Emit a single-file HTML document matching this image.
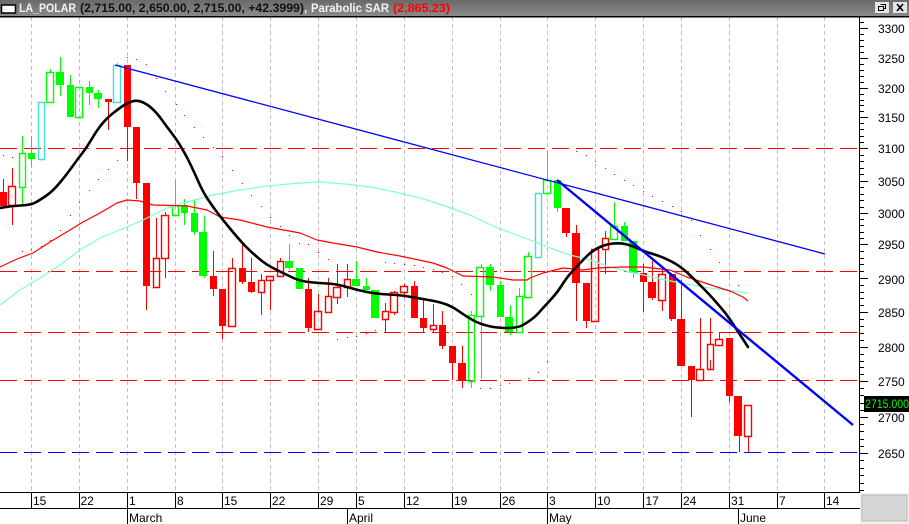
<!DOCTYPE html>
<html><head><meta charset="utf-8"><style>
html,body{margin:0;padding:0;background:#fff}
svg{display:block;font-family:"Liberation Sans",sans-serif}
</style></head><body>
<svg width="909" height="524" viewBox="0 0 909 524" xmlns="http://www.w3.org/2000/svg">
<defs><linearGradient id="tb" x1="0" y1="0" x2="0" y2="1"><stop offset="0" stop-color="#6a6a6a"/><stop offset="1" stop-color="#8a8a8a"/></linearGradient></defs>
<rect width="909" height="524" fill="#fff"/>
<!-- grid -->
<path d="M31.5 17V492M79.5 17V492M127.5 17V492M175.5 17V492M222.5 17V492M270.5 17V492M318.5 17V492M356.5 17V492M404.5 17V492M452.5 17V492M500.5 17V492M547.5 17V492M595.5 17V492M643.5 17V492M681.5 17V492M729.5 17V492M777.5 17V492M824.5 17V492" stroke="#c0c0c0" stroke-dasharray="4 3" fill="none" shape-rendering="crispEdges"/>
<!-- horizontals -->
<path d="M0 148.5H858M0 271.5H858M0 332.5H858M0 380.5H858" stroke="#f00" stroke-dasharray="17 7" fill="none" shape-rendering="crispEdges"/>
<path d="M0 452.5H858" stroke="#00f" stroke-dasharray="17 7" fill="none" shape-rendering="crispEdges"/>
<g shape-rendering="crispEdges">
<!-- wicks -->
<path fill="none" stroke="#f00" d="M3.5 179V192M12.5 168V186M12.5 205V225M108.5 102V130M127.5 127V161M136.5 183V199M146.5 286V310M156.5 218V258M165.5 212V215M165.5 258V278M213.5 251V276M213.5 289V296M222.5 326V339M232.5 258V268M242.5 243V268M242.5 282V284M251.5 258V282M251.5 292V293M261.5 274V280M261.5 292V315M270.5 280V310M280.5 258V261M308.5 278V289M308.5 328V332M318.5 294V311M328.5 278V296M337.5 264V287M337.5 297V304M347.5 264V279M347.5 287V297M385.5 303V311M385.5 319V332M394.5 291V292M394.5 312V315M404.5 284V286M404.5 292V298M414.5 281V286M423.5 298V318M423.5 328V332M433.5 304V325M433.5 329V332M442.5 311V325M442.5 346V349M452.5 363V380M462.5 346V363M462.5 380V388M566.5 233V237M576.5 225V233M576.5 283V321M586.5 321V328M605.5 231V238M605.5 249V274M643.5 264V273M643.5 282V312M652.5 261V282M652.5 298V300M662.5 267V274M662.5 300V311M671.5 319V321M681.5 280V319M691.5 380V417M700.5 318V369M710.5 318V344M710.5 360V369M719.5 332V339M719.5 345V346M729.5 396V402M739.5 436V452M748.5 436V452"/>
<path fill="none" stroke="#0f0" d="M22.5 136V153M22.5 187V205M31.5 136V153M31.5 159V167M50.5 69V72M60.5 57V72M60.5 85V96M70.5 75V85M89.5 81V87M89.5 93V105M98.5 90V93M98.5 99V108M175.5 180V205M184.5 199V205M184.5 213V225M194.5 199V213M194.5 232V235M204.5 216V232M204.5 276V278M289.5 244V261M289.5 268V270M356.5 261V279M366.5 278V286M366.5 290V293M471.5 311V315M471.5 381V388M481.5 264V267M481.5 316V379M490.5 264V267M490.5 285V291M500.5 281V285M510.5 305V317M510.5 332V335M519.5 288V296M528.5 252V256M547.5 151V180M557.5 208V212M614.5 202V226M614.5 239V240M624.5 222V226M633.5 273V278"/>
<path fill="none" stroke="#40e0d0" d="M117.5 63V65M41.5 159V160"/>
<!-- solid -->
<path fill="#f00" d="M0 192h7v14h-7zM105 99h7v3h-7zM124 65h7v62h-7zM133 127h7v56h-7zM143 183h7v103h-7zM210 276h7v13h-7zM219 289h7v37h-7zM239 268h7v14h-7zM248 282h7v10h-7zM305 289h7v39h-7zM411 286h7v32h-7zM420 318h7v10h-7zM439 325h7v21h-7zM449 346h7v17h-7zM458 363h8v17h-8zM562 208h8v25h-8zM572 233h8v50h-8zM583 283h7v38h-7zM640 273h7v9h-7zM648 282h8v16h-8zM669 274h7v45h-7zM677 319h8v47h-8zM688 366h7v14h-7zM726 338h7v58h-7zM734 396h8v40h-8z"/>
<path fill="#0f0" d="M28 153h7v6h-7zM56 72h8v13h-8zM67 85h7v32h-7zM86 87h7v6h-7zM94 93h8v6h-8zM181 205h7v8h-7zM191 213h7v19h-7zM199 232h8v44h-8zM285 261h8v7h-8zM296 268h7v21h-7zM352 279h8v7h-8zM363 286h7v4h-7zM371 290h8v28h-8zM486 267h8v18h-8zM497 285h7v32h-7zM505 317h8v15h-8zM554 180h7v28h-7zM621 226h7v15h-7zM629 241h8v32h-8z"/>
</g>
<!-- hollow -->
<path fill="none" stroke="#f00" stroke-width="1.400" d="M8.5 186.5h7v19h-7zM153.5 258.5h6v29h-6zM161.5 215.5h7v43h-7zM228.5 268.5h7v58h-7zM258.5 280.5h6v12h-6zM266.5 276.5h7v4h-7zM277.5 261.5h6v15h-6zM314.5 311.5h7v18h-7zM325.5 296.5h6v16h-6zM333.5 287.5h7v10h-7zM344.5 279.5h6v8h-6zM382.5 311.5h6v8h-6zM390.5 292.5h7v20h-7zM400.5 286.5h7v6h-7zM430.5 325.5h6v4h-6zM591.5 249.5h7v72h-7zM602.5 238.5h6v11h-6zM658.5 274.5h7v26h-7zM696.5 369.5h7v11h-7zM707.5 344.5h6v25h-6zM715.5 339.5h7v6h-7zM744.5 405.5h7v31h-7z"/>
<path fill="none" stroke="#0f0" stroke-width="1.400" d="M19.5 153.5h6v34h-6zM46.5 72.5h7v30h-7zM75.5 87.5h7v30h-7zM172.5 205.5h6v10h-6zM468.5 315.5h6v66h-6zM476.5 267.5h7v49h-7zM516.5 296.5h6v36h-6zM524.5 256.5h7v41h-7zM543.5 180.5h7v13h-7zM610.5 226.5h7v13h-7z"/>
<path fill="none" stroke="#40e0d0" stroke-width="1.400" d="M38.5 102.5h6v57h-6zM113.5 65.5h7v37h-7zM535.5 193.5h6v64h-6z"/>
<g shape-rendering="crispEdges">
<!-- SAR -->
<path fill="#f00" d="M22 251h1v1h-1zM31 249h1v1h-1zM41 246h1v1h-1zM50 240h1v1h-1zM60 230h1v1h-1zM70 215h1v1h-1zM79 202h1v1h-1zM89 190h1v1h-1zM98 179h1v1h-1zM108 169h1v1h-1zM117 160h1v1h-1zM127 57h1v1h-1zM136 59h1v1h-1zM146 64h1v1h-1zM156 78h1v1h-1zM165 91h1v1h-1zM176 104h1v1h-1zM184 115h1v1h-1zM194 127h1v1h-1zM203 137h1v1h-1zM213 147h1v1h-1zM222 156h1v1h-1zM232 170h1v1h-1zM242 183h1v1h-1zM251 195h1v1h-1zM261 206h1v1h-1zM270 217h1v1h-1zM280 226h1v1h-1zM289 235h1v1h-1zM299 243h1v1h-1zM3 155h1v1h-1zM12 157h1v1h-1zM308 244h1v1h-1zM318 252h1v1h-1zM328 259h1v1h-1zM337 339h1v1h-1zM347 337h1v1h-1zM356 336h1v1h-1zM366 333h1v1h-1zM375 330h1v1h-1zM385 262h1v1h-1zM394 263h1v1h-1zM404 264h1v1h-1zM414 265h1v1h-1zM423 267h1v1h-1zM433 269h1v1h-1zM442 272h1v1h-1zM452 276h1v1h-1zM461 284h1v1h-1zM471 294h1v1h-1zM480 388h1v1h-1zM490 388h1v1h-1zM500 385h1v1h-1zM509 383h1v1h-1zM528 378h1v1h-1zM538 372h1v1h-1zM547 361h1v1h-1zM576 151h1v1h-1zM586 155h1v1h-1zM595 161h1v1h-1zM605 168h1v1h-1zM614 174h1v1h-1zM624 180h1v1h-1zM633 185h1v1h-1zM643 191h1v1h-1zM652 196h1v1h-1zM662 201h1v1h-1zM672 206h1v1h-1zM681 211h1v1h-1zM691 220h1v1h-1zM700 235h1v1h-1zM710 249h1v1h-1zM719 262h1v1h-1zM729 274h1v1h-1zM738 285h1v1h-1z"/>
</g>
<!-- cyan MA -->
<polyline fill="none" stroke="#7fffd4" stroke-width="1.200" stroke-linejoin="round" points="0,305 20,290 40,278 60,265 80,250 100,238 127,227 143,220 167,208 187,202 213,195 240,190 267,186 300,183 320,182 345,184 370,187 395,192 420,198 445,206 470,215 495,227 530,240 550,248 570,255 590,260 610,267 630,272 657,278 680,283 710,288 747,293"/>
<!-- red MA -->
<polyline fill="none" stroke="#f00" stroke-width="1.200" stroke-linejoin="round" points="0,267 17,259 33,253 50,242 70,230 83,222 100,213 117,203 127,200 140,201 153,205 187,206 207,210 220,217 240,220 267,227 300,233 317,240 333,243 357,247 377,252 400,256 433,263 447,268 463,276 493,277 513,280 527,280 530,278 543,273 563,268 583,270 597,268 623,267 643,267 670,270 687,277 717,287 730,291 743,297 748,301"/>
<!-- black MA -->
<path fill="none" stroke="#000" stroke-width="2.600" stroke-linecap="round" d="M0 208Q10 206 20.5 205.5Q31 205 35.5 202.5Q40 200 46.5 195.5Q53 191 60 182.5Q67 174 72 167Q77 160 82 153.5Q87 147 92 138.5Q97 130 102 124Q107 118 112 114Q117 110 122 106.5Q127 103 132 101.5Q137 100 142 102Q147 104 152 108.5Q157 113 162 120Q167 127 172 133.5Q177 140 182 148.5Q187 157 191 165.5Q195 174 199 183Q203 192 208 199.5Q213 207 218 213.5Q223 220 230 228.5Q237 237 242 242.5Q247 248 252 252.5Q257 257 262 261Q267 265 272 267.5Q277 270 282 272.5Q287 275 293.5 278Q300 281 308.5 282Q317 283 327 283.5Q337 284 347 287Q357 290 367 292Q377 294 388.5 294.5Q400 295 408.5 296.5Q417 298 428.5 300Q440 302 446.5 304.5Q453 307 460 312Q467 317 473.5 320.5Q480 324 488.5 326Q497 328 507 328Q517 328 522 325.5Q527 323 532 319Q537 315 539.5 312Q542 309 549.5 301Q557 293 562 285Q567 277 573.5 270Q580 263 586.5 256.5Q593 250 600 247Q607 244 613.5 243.5Q620 243 625 244Q630 245 636.5 248Q643 251 653 254Q663 257 671.5 261.5Q680 266 686.5 272Q693 278 701.5 286.5Q710 295 716 302Q722 309 724.5 312Q727 315 732 322.5Q737 330 748 347"/>
<!-- trend lines -->
<path d="M115 65L825 254" stroke="#00f" stroke-width="1.300" fill="none"/>
<path d="M557 180L853 425" stroke="#00f" stroke-width="2.400" fill="none"/>
<!-- axis -->
<g shape-rendering="crispEdges">
<path fill="none" stroke="#000" d="M859.5 17V492M0 492.5H860M0 508.5H860M31.5 492V508M79.5 492V508M127.5 492V524M175.5 492V508M222.5 492V508M270.5 492V508M318.5 492V508M356.5 492V508M404.5 492V508M452.5 492V508M500.5 492V508M547.5 492V524M595.5 492V508M643.5 492V508M681.5 492V508M729.5 492V508M777.5 492V508M824.5 492V508M347.5 508V524M738.5 508V524"/>
<path fill="none" stroke="#000" d="M859 28.500h9M859 58.500h9M859 88.500h9M859 117.500h9M859 148.500h9M859 181.500h9M859 213.500h9M859 244.500h9M859 278.500h9M859 312.500h9M859 347.500h9M859 381.500h9M859 417.500h9M859 453.500h9"/>
<path fill="none" stroke="#000" d="M859 22.500h5M859 34.500h5M859 40.500h5M859 46.500h5M859 52.500h5M859 64.500h5M859 70.500h5M859 76.500h5M859 82.500h5M859 94.500h5M859 100.500h5M859 105.500h5M859 111.500h5M859 123.500h5M859 129.500h5M859 136.500h5M859 142.500h5M859 155.500h5M859 161.500h5M859 168.500h5M859 174.500h5M859 187.500h5M859 194.500h5M859 200.500h5M859 207.500h5M859 219.500h5M859 225.500h5M859 232.500h5M859 238.500h5M859 251.500h5M859 258.500h5M859 264.500h5M859 271.500h5M859 285.500h5M859 292.500h5M859 298.500h5M859 305.500h5M859 319.500h5M859 326.500h5M859 333.500h5M859 340.500h5M859 354.500h5M859 361.500h5M859 367.500h5M859 374.500h5M859 388.500h5M859 395.500h5M859 403.500h5M859 410.500h5M859 424.500h5M859 431.500h5M859 439.500h5M859 446.500h5M859 460.500h5M859 468.500h5M859 475.500h5M859 483.500h5M859 490.500h5"/>
</g>
<!-- y labels -->
<g font-size="12" fill="#000">
<text x="878" y="33">3300</text><text x="878" y="63">3250</text><text x="878" y="93">3200</text><text x="878" y="122">3150</text><text x="878" y="153">3100</text><text x="878" y="186">3050</text><text x="878" y="218">3000</text><text x="878" y="249">2950</text><text x="878" y="284">2900</text><text x="878" y="317">2850</text><text x="878" y="352">2800</text><text x="878" y="386">2750</text><text x="878" y="422">2700</text><text x="878" y="458">2650</text>
</g>
<rect x="864" y="396" width="45" height="16" fill="#000"/>
<text x="865" y="408" font-size="11.500" fill="#0f0" textLength="44" lengthAdjust="spacingAndGlyphs">2715.000</text>
<!-- x labels -->
<g font-size="12" fill="#000">
<text x="33" y="505">15</text><text x="80.500" y="505">22</text><text x="129" y="505">1</text><text x="177" y="505">8</text><text x="224" y="505">15</text><text x="272" y="505">22</text><text x="320" y="505">29</text><text x="358" y="505">5</text><text x="406" y="505">12</text><text x="454" y="505">19</text><text x="502" y="505">26</text><text x="549" y="505">3</text><text x="597" y="505">10</text><text x="645.500" y="505">17</text><text x="683" y="505">24</text><text x="731" y="505">31</text><text x="779" y="505">7</text><text x="826" y="505">14</text>
<text x="129" y="522">March</text><text x="349" y="522">April</text><text x="549" y="522">May</text><text x="740" y="522">June</text>
</g>
<!-- corner box -->
<rect x="860" y="493" width="49" height="31" fill="#f0f0f0"/>
<rect x="862" y="495" width="45" height="26" fill="#d6d6d6" stroke="#b8b8b8"/>
<!-- title bar -->
<rect width="909" height="16" fill="url(#tb)"/>
<rect y="16" width="909" height="1.500" fill="#000"/>
<rect x="1.500" y="5" width="14" height="8" fill="#fff" stroke="#000" stroke-width="1.500"/>
<g font-size="11.500" font-weight="bold">
<text x="19" y="12" fill="#f2f2f2" textLength="57" lengthAdjust="spacingAndGlyphs">LA_POLAR</text>
<text x="80" y="12" fill="#111" textLength="224" lengthAdjust="spacingAndGlyphs">(2,715.00, 2,650.00, 2,715.00, +42.3999)</text>
<text x="304" y="12" fill="#f2f2f2">,</text>
<text x="311" y="12" fill="#f2f2f2" textLength="78" lengthAdjust="spacingAndGlyphs">Parabolic SAR</text>
<text x="393" y="12" fill="#f00" textLength="57" lengthAdjust="spacingAndGlyphs">(2,865.23)</text>
</g>
<!-- buttons -->
<rect x="875" y="2" width="14" height="11" fill="#e4e4e4"/>
<rect x="893" y="2" width="14" height="11" fill="#e4e4e4"/>
<path d="M880.500 4.500h5v4h-2M878.500 6.500h5v4h-5z" fill="none" stroke="#000" shape-rendering="crispEdges"/>
<path d="M897 4L903 11M903 4L897 11" stroke="#000" stroke-width="1.600" fill="none"/>
</svg>
</body></html>
